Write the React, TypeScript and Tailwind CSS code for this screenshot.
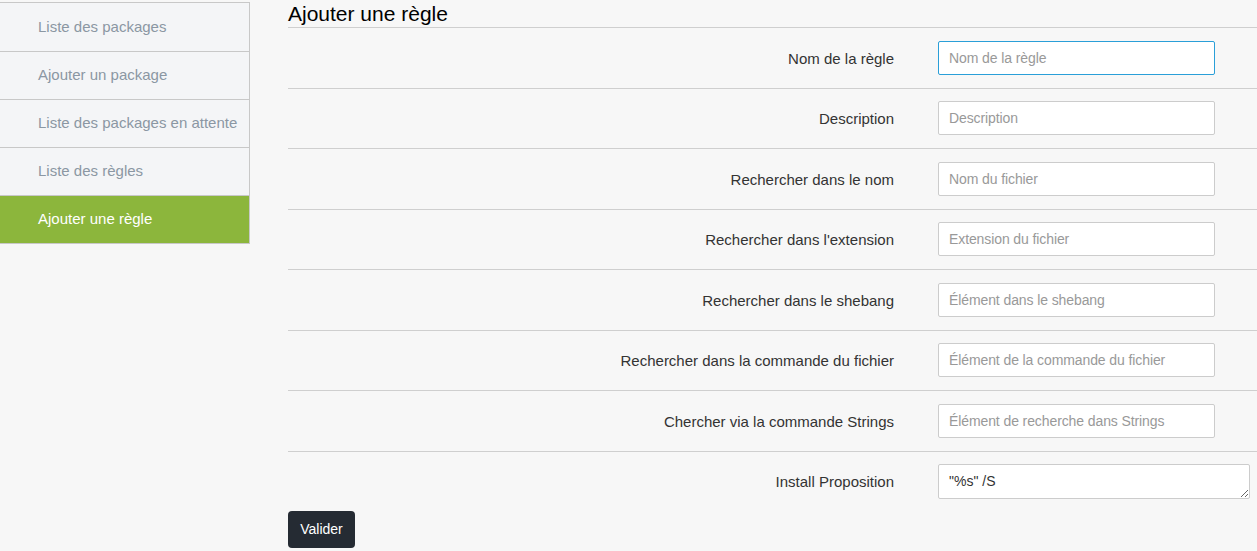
const menu = [
  "Liste des packages",
  "Ajouter un package",
  "Liste des packages en attente",
  "Liste des règles",
  "Ajouter une règle",
];

const fields = [
  { label: "Nom de la règle", placeholder: "Nom de la règle", focus: true },
  { label: "Description", placeholder: "Description" },
  { label: "Rechercher dans le nom", placeholder: "Nom du fichier" },
  { label: "Rechercher dans l'extension", placeholder: "Extension du fichier" },
  { label: "Rechercher dans le shebang", placeholder: "Élément dans le shebang" },
  {
    label: "Rechercher dans la commande du fichier",
    placeholder: "Élément de la commande du fichier",
  },
  {
    label: "Chercher via la commande Strings",
    placeholder: "Élément de recherche dans Strings",
  },
];

export default function App() {
  return (
    <div className="flex min-h-[551px] bg-[#f7f7f7] font-['Liberation_Sans',Arial,sans-serif]">
      <aside className="w-[250px] shrink-0 pt-[2px]">
        <ul className="border-y border-r border-[#c8c8c8] bg-[#f4f5f7]">
          {menu.map((item, i) => (
            <li
              key={item}
              className={
                "flex h-12 items-center pl-[38px] text-[15px] " +
                (i > 0 ? "border-t border-[#c8c8c8] " : "") +
                (i === menu.length - 1
                  ? "bg-[#8cb63c] text-white"
                  : "text-[#8b97a3]")
              }
            >
              {item}
            </li>
          ))}
        </ul>
      </aside>

      <main className="flex-1 pl-[38px]">
        <h1 className="h-[28px] border-b border-[#cfcfcf] pt-[2px] text-[21px] leading-[24px] text-black">
          Ajouter une règle
        </h1>
        <form>
          {fields.map((f) => (
            <div
              key={f.label}
              className="flex h-[60.5px] items-center border-b border-[#cfcfcf]"
            >
              <label className="w-[606px] pt-[2px] text-right text-[15px] text-[#333]">
                {f.label}
              </label>
              <input
                placeholder={f.placeholder}
                className={
                  "ml-[44px] h-[34px] w-[277px] rounded-[2px] border bg-white px-[10px] text-[14px] tracking-[-0.1px] text-[#333] outline-none placeholder:text-[#999] " +
                  (f.focus ? "border-[#2a9fd8]" : "border-[#cccccc]")
                }
              />
            </div>
          ))}
          <div className="flex h-[60px] items-center">
            <label className="w-[606px] pt-[2px] text-right text-[15px] text-[#333]">
              Install Proposition
            </label>
            <textarea
              defaultValue={'"%s" /S'}
              rows={1}
              className="ml-[44px] h-[35px] w-[312px] rounded-[2px] border border-[#cccccc] bg-white px-[10px] py-[7px] text-[14px] leading-[18px] text-[#333] outline-none"
            />
          </div>
          <button
            type="button"
            className="mt-[-1px] h-[37px] w-[67px] rounded-[4px] bg-[#252b33] text-[14px] text-white"
          >
            Valider
          </button>
        </form>
      </main>
    </div>
  );
}
